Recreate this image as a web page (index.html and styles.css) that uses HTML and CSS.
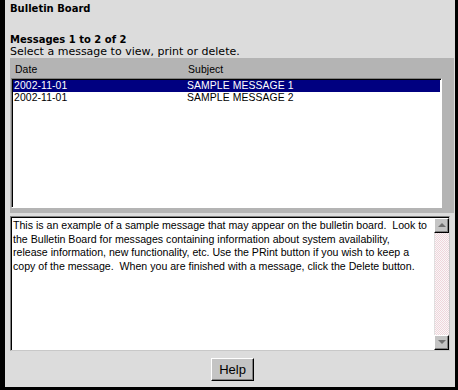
FILE: index.html
```html
<!DOCTYPE html>
<html lang="en">
<head>
    <meta charset="UTF-8">
    <title>Bulletin Board</title>
    <link rel="stylesheet" href="styles.css">
</head>
<body>
    <div class="window">
        <div class="title">Bulletin Board</div>
        <div class="count">Messages 1 to 2 of 2</div>
        <div class="hint">Select a message to view, print or delete.</div>

        <div class="panel">
            <div class="list-head">
                <span class="col-date">Date</span>
                <span class="col-subj">Subject</span>
            </div>
            <div class="list">
                <div class="row selected">
                    <span class="col-date">2002-11-01</span>
                    <span class="col-subj">SAMPLE MESSAGE 1</span>
                </div>
                <div class="row">
                    <span class="col-date">2002-11-01</span>
                    <span class="col-subj">SAMPLE MESSAGE 2</span>
                </div>
            </div>
        </div>

        <div class="viewer">
            <div class="msg">This is an example of a sample message that may appear on the bulletin board.  Look to
the Bulletin Board for messages containing information about system availability,
release information, new functionality, etc. Use the PRint button if you wish to keep a
copy of the message.  When you are finished with a message, click the Delete button.</div>
            <div class="scroll">
                <div class="arrow up"></div>
                <div class="track"></div>
                <div class="arrow down"></div>
            </div>
        </div>

        <div class="actions">
            <button class="help-btn">Help</button>
        </div>
    </div>
</body>
</html>
```

FILE: styles.css
```css
body { margin: 0; background: #000; }
.window {
    width: 445px; height: 387px;
    border-left: 5px solid #000; border-right: 3px solid #000; border-bottom: 3px solid #000;
    background: #dcdcdc; padding-left: 5px; box-sizing: content-box;
    font-family: "DejaVu Sans", Verdana, sans-serif; color: #000;
}
.title { font-size: 10px; font-weight: bold; line-height: 14px; padding-top: 2px; }
.count { font-size: 10px; font-weight: bold; line-height: 12px; margin-top: 18px; }
.hint { font-size: 11px; line-height: 12px; }

.panel { width: 444px; height: 155px; background: #b4b4b4; }
.list-head, .row {
    display: flex; font-family: "Liberation Sans", Arial, sans-serif;
    font-size: 10.4px; line-height: 12px; letter-spacing: 0.1px;
}
.list-head { padding: 6px 0 0 5px; height: 14px; }
.list-head .col-date { width: 173px; }
.list {
    margin-left: 1px; width: 431px; height: 130px; background: #fff;
    border: 1px solid #fff; border-top-color: #808080; border-left-color: #808080;
    box-shadow: inset 1px 1px 0 #000; padding: 1px 0 0 1px; box-sizing: border-box;
}
.row { padding-left: 1px; }
.row .col-date { width: 173px; }
.row.selected { background: #000080; color: #fff; margin-right: 1px; }

.viewer {
    display: flex; margin-top: 3px; width: 440px; height: 135px; box-sizing: border-box;
    background: #fff; border: 1px solid #c8c8c8; border-top-color: #808080; border-left-color: #808080;
    box-shadow: inset 1px 1px 0 #000;
}
.msg {
    flex: 1; white-space: pre; overflow: hidden;
    font-family: "Liberation Sans", Arial, sans-serif; font-size: 10.6px; line-height: 13.67px;
    padding: 2px 0 0 2px;
}
.scroll { width: 15px; display: flex; flex-direction: column; padding-top: 1px; }
.arrow {
    height: 15px; box-sizing: border-box; background: #c4c4c4; position: relative;
    border: 1px solid; border-color: #fff #000 #000 #fff;
    box-shadow: inset -1px -1px 0 #808080;
}
.arrow::after {
    content: ""; position: absolute; left: 3px; width: 0; height: 0;
    border-left: 4px solid transparent; border-right: 4px solid transparent;
}
.arrow.up::after { top: 4px; border-bottom: 4px solid #707070; }
.arrow.down::after { top: 4px; border-top: 4px solid #707070; }
.track {
    flex: 1;
    background: repeating-conic-gradient(#f0d4da 0 25%, #f8f8f8 0 50%) 0 0 / 2px 2px;
    box-shadow: inset 1px 0 0 #e0e0e0;
}

.actions { display: flex; justify-content: center; padding-top: 7px; }
.help-btn {
    width: 43px; height: 23px; padding: 0; background: #c4c4c4;
    font-family: "Liberation Sans", Arial, sans-serif; font-size: 13px; color: #000;
    border: 1px solid; border-color: #fff #000 #000 #fff;
    box-shadow: inset -1px -1px 0 #808080;
}
```
